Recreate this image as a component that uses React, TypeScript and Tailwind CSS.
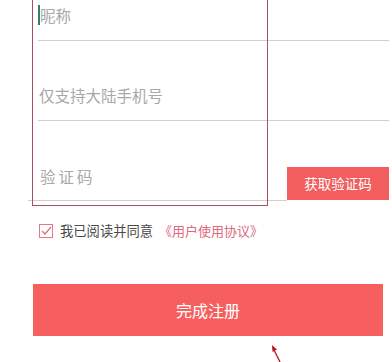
export default function App() {
  return (
    <div
      className="relative w-[392px] h-[362px] overflow-hidden bg-white"
      style={{ fontFamily: '"Noto Sans CJK SC", "Noto Sans", sans-serif' }}
    >
      <div className="flex flex-col">
        <div className="ml-[38px] mr-[3px] h-[41px] border-b border-[#cfcfcf] flex items-start pt-[4px]">
          <span className="w-[2px] h-[20px] bg-[#2f7f6f] mt-[1px]" />
          <span className="text-[15.5px] leading-[22px] text-[#a8a8a8]">昵称</span>
        </div>
        <div className="ml-[38px] mr-[3px] h-[80px] border-b border-[#cfcfcf] flex items-end pb-[14px]">
          <span className="ml-[1px] text-[15.5px] leading-[22px] text-[#a8a8a8]">仅支持大陆手机号</span>
        </div>
        <div className="flex items-end h-[80px] mr-[3px]">
          <div className="ml-[28px] flex-1 h-full border-b border-[#cfcfcf] flex items-end pb-[13px]">
            <span className="ml-[12px] text-[15.5px] leading-[22px] tracking-[3px] text-[#a8a8a8]">验证码</span>
          </div>
          <button className="w-[102px] h-[33px] mb-[1px] bg-[#f25d5d] text-white text-[13.5px] flex items-center justify-center">
            获取验证码
          </button>
        </div>
        <div className="ml-[39px] mt-[20px] flex items-center h-[20px]">
          <svg width="14" height="14" viewBox="0 0 14 14" className="shrink-0">
            <rect x="0.5" y="0.5" width="13" height="13" fill="none" stroke="#e07a8a" strokeWidth="1" />
            <path d="M3 7 L6 10 L12 3" fill="none" stroke="#e06b7e" strokeWidth="1.3" />
          </svg>
          <span className="ml-[7px] text-[13.3px] text-[#4a4a4a]">我已阅读并同意</span>
          <span className="ml-[6px] text-[13px] text-[#e0687c]">《用户使用协议》</span>
        </div>
        <button className="ml-[33px] mt-[43px] w-[350px] h-[52px] bg-[#f75f5f] text-white text-[16px] flex items-center justify-center">
          完成注册
        </button>
      </div>

      <div className="absolute left-[32px] top-[-2px] w-[236px] h-[208px] border border-[#a8505e]" />

      <svg className="absolute left-[264px] top-[340px]" width="24" height="24" viewBox="0 0 24 24">
        <path d="M16 22 L9 8" stroke="#b81c2c" strokeWidth="1.4" />
        <path d="M8 5 L8.5 12 L13 9.5 Z" fill="#c0182a" />
      </svg>
    </div>
  );
}
